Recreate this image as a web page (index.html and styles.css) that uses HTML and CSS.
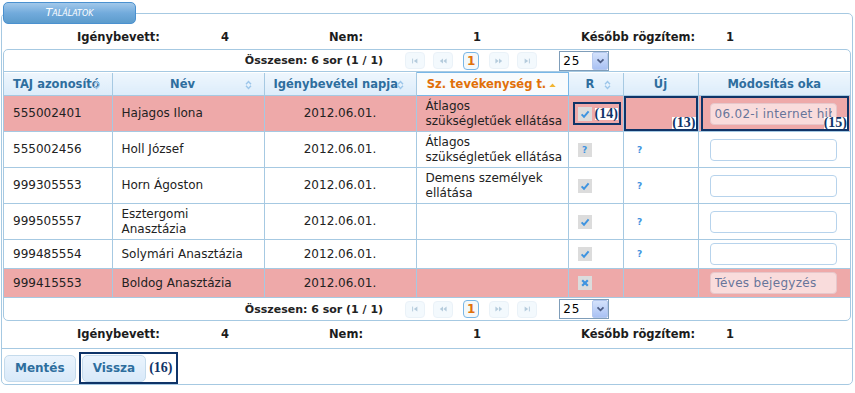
FILE: index.html
```html
<!DOCTYPE html>
<html lang="hu">
	<head>
		<meta charset="utf-8">
		<title>Találatok</title>
		<link rel="stylesheet" href="styles.css">
	</head>
	<body>
		<svg class="sprite" aria-hidden="true">
			<symbol id="i-sort" viewBox="0 0 7 10"><path d="M1 4.2L3.5 1.6L6 4.2M1 5.8L3.5 8.4L6 5.8" fill="none" stroke="currentColor" stroke-width="1.4"/></symbol>
			<symbol id="i-asc" viewBox="0 0 8 5"><path d="M0 5L4 0.5L8 5z" fill="currentColor"/></symbol>
			<symbol id="i-check" viewBox="0 0 14 14"><path d="M3.6 7.4L6 9.8L10.6 4.4" fill="none" stroke="currentColor" stroke-width="2"/></symbol>
			<symbol id="i-cross" viewBox="0 0 14 14"><path d="M4.2 4.2L9.8 9.8M9.8 4.2L4.2 9.8" stroke="currentColor" stroke-width="2.2"/></symbol>
			<symbol id="i-first" viewBox="0 0 10 7"><path d="M2 0.5v6" stroke="currentColor" stroke-width="1.2"/><path d="M8 0.5L3.5 3.5L8 6.5z" fill="currentColor"/></symbol>
			<symbol id="i-prev" viewBox="0 0 10 7"><path d="M5 0.5L1 3.5L5 6.5zM9.5 0.5L5.5 3.5L9.5 6.5z" fill="currentColor"/></symbol>
			<symbol id="i-next" viewBox="0 0 10 7"><path d="M0.5 0.5L4.5 3.5L0.5 6.5zM5 0.5L9 3.5L5 6.5z" fill="currentColor"/></symbol>
			<symbol id="i-last" viewBox="0 0 10 7"><path d="M2 0.5L6.5 3.5L2 6.5z" fill="currentColor"/><path d="M8 0.5v6" stroke="currentColor" stroke-width="1.2"/></symbol>
			<symbol id="i-down" viewBox="0 0 10 7"><path d="M1.5 1.5L5 5L8.5 1.5" fill="none" stroke="currentColor" stroke-width="2"/></symbol>
		</svg>

		<fieldset class="results">
			<legend class="results-title"><span class="results-title-text">Találatok</span></legend>

			<div class="summary">
				<span>Igénybevett:</span><span>4</span>
				<span>Nem:</span><span>1</span>
				<span>Később rögzítem:</span><span>1</span>
			</div>

			<div class="grid-panel">
				<div class="pager pager-top">
					<span class="pager-info">Összesen: 6 sor (1 / 1)</span>
					<button class="pager-btn" disabled><svg><use href="#i-first"/></svg></button>
					<button class="pager-btn" disabled><svg><use href="#i-prev"/></svg></button>
					<span class="pager-page">1</span>
					<button class="pager-btn" disabled><svg><use href="#i-next"/></svg></button>
					<button class="pager-btn" disabled><svg><use href="#i-last"/></svg></button>
					<span class="page-size">
						<select><option>25</option><option>50</option></select>
						<span class="page-size-arrow"><svg><use href="#i-down"/></svg></span>
					</span>
				</div>

				<table class="grid">
					<colgroup>
						<col class="col-taj">
						<col class="col-wide">
						<col class="col-wide">
						<col class="col-wide">
						<col class="col-r">
						<col class="col-new">
						<col class="col-wide">
					</colgroup>
					<thead>
						<tr>
							<th>TAJ azonosító<svg class="sort"><use href="#i-sort"/></svg></th>
							<th>Név<svg class="sort"><use href="#i-sort"/></svg></th>
							<th>Igénybevétel napja<svg class="sort"><use href="#i-sort"/></svg></th>
							<th class="is-sorted">Sz. tevékenység t.<svg class="sort-asc"><use href="#i-asc"/></svg></th>
							<th>R<svg class="sort"><use href="#i-sort"/></svg></th>
							<th class="plain">Új</th>
							<th class="plain">Módosítás oka</th>
						</tr>
					</thead>
					<tbody>
						<tr class="is-rejected">
							<td>555002401</td>
							<td>Hajagos Ilona</td>
							<td class="date">2012.06.01.</td>
							<td>Átlagos<br>szükségletűek ellátása</td>
							<td>
								<span class="note note-inline note-flag">
									<span class="flag"><svg><use href="#i-check"/></svg></span>
									<span class="note-label">(14)</span>
								</span>
							</td>
							<td class="noted">
								<span class="note note-fill"><span class="note-label">(13)</span></span>
							</td>
							<td class="noted reason">
								<input class="reason-input" value="06.02-i internet hiba miatt" disabled>
								<span class="note note-fill note-reason"><span class="note-label">(15)</span></span>
							</td>
						</tr>
						<tr>
							<td>555002456</td>
							<td>Holl József</td>
							<td class="date">2012.06.01.</td>
							<td>Átlagos<br>szükségletűek ellátása</td>
							<td><span class="flag flag-unknown">?</span></td>
							<td><span class="query">?</span></td>
							<td class="reason"><input class="reason-input"></td>
						</tr>
						<tr>
							<td>999305553</td>
							<td>Horn Ágoston</td>
							<td class="date">2012.06.01.</td>
							<td>Demens személyek<br>ellátása</td>
							<td><span class="flag"><svg><use href="#i-check"/></svg></span></td>
							<td><span class="query">?</span></td>
							<td class="reason"><input class="reason-input"></td>
						</tr>
						<tr>
							<td>999505557</td>
							<td>Esztergomi<br>Anasztázia</td>
							<td class="date">2012.06.01.</td>
							<td></td>
							<td><span class="flag"><svg><use href="#i-check"/></svg></span></td>
							<td><span class="query">?</span></td>
							<td class="reason"><input class="reason-input"></td>
						</tr>
						<tr>
							<td>999485554</td>
							<td>Solymári Anasztázia</td>
							<td class="date">2012.06.01.</td>
							<td></td>
							<td><span class="flag"><svg><use href="#i-check"/></svg></span></td>
							<td><span class="query">?</span></td>
							<td class="reason"><input class="reason-input"></td>
						</tr>
						<tr class="is-rejected">
							<td>999415553</td>
							<td>Boldog Anasztázia</td>
							<td class="date">2012.06.01.</td>
							<td></td>
							<td><span class="flag"><svg><use href="#i-cross"/></svg></span></td>
							<td></td>
							<td class="reason"><input class="reason-input" value="Téves bejegyzés" disabled></td>
						</tr>
					</tbody>
				</table>

				<div class="pager">
					<span class="pager-info">Összesen: 6 sor (1 / 1)</span>
					<button class="pager-btn" disabled><svg><use href="#i-first"/></svg></button>
					<button class="pager-btn" disabled><svg><use href="#i-prev"/></svg></button>
					<span class="pager-page">1</span>
					<button class="pager-btn" disabled><svg><use href="#i-next"/></svg></button>
					<button class="pager-btn" disabled><svg><use href="#i-last"/></svg></button>
					<span class="page-size">
						<select><option>25</option><option>50</option></select>
						<span class="page-size-arrow"><svg><use href="#i-down"/></svg></span>
					</span>
				</div>
			</div>

			<div class="summary summary-bottom">
				<span>Igénybevett:</span><span>4</span>
				<span>Nem:</span><span>1</span>
				<span>Később rögzítem:</span><span>1</span>
			</div>

			<div class="actions">
				<button class="action">Mentés</button>
				<span class="note note-inline note-action">
					<button class="action">Vissza</button>
					<span class="note-label">(16)</span>
				</span>
			</div>
		</fieldset>
	</body>
</html>
```

FILE: styles.css
```css
body {
	margin: 0;
	padding: 2px 2px 0 1px;
	font-family: 'DejaVu Sans', Verdana, sans-serif;
	font-size: 12px;
	color: #222;
	background: #fff;
}

.sprite {
	position: absolute;
	width: 0;
	height: 0;
}

/* outer box */
.results {
	margin: 0;
	padding: 0 1px;
	min-width: 0;
	border: 1px solid #a6c9e2;
	border-radius: 5px;
}

.results-title {
	box-sizing: border-box;
	width: 133px;
	height: 22px;
	margin: 0;
	padding: 0;
	border: 1px solid #4a91d0;
	border-radius: 5px;
	background: linear-gradient(#a2c8ea, #72abdc 50%, #5c9ccc);
	color: #fff;
	font-size: 11px;
	font-style: italic;
	font-variant: small-caps;
	line-height: 20px;
}

.results-title-text {
	display: block;
	text-align: center;
}

.summary {
	display: grid;
	grid-template-columns: 144px 108px 144px 108px 145px auto;
	height: 25px;
	padding-left: 74px;
	font-size: 11.5px;
	font-weight: bold;
	line-height: 27px;
	color: #1c1c1c;
}

.summary-bottom {
	height: 27px;
	line-height: 27px;
	margin: 0 -1px;
	padding-left: 75px;
	border-bottom: 1px solid #a6c9e2;
}

/* grid */
.grid-panel {
	border: 1px solid #a6c9e2;
	border-radius: 5px;
	overflow: hidden;
	background: #fff;
}

.pager {
	display: flex;
	align-items: center;
	justify-content: center;
	height: 22px;
	font-size: 11px;
	font-weight: bold;
}

.pager-top {
	height: 21px;
	border-bottom: 1px solid #a6c9e2;
}

.pager-info {
	margin-right: 18px;
}

.pager-btn {
	display: flex;
	align-items: center;
	justify-content: center;
	width: 20px;
	height: 17px;
	margin: 0 4px;
	padding: 0;
	border: 1px solid #c5dbec;
	border-radius: 4px;
	background: #dfeffc;
	color: #2e6e9e;
	opacity: .35;
}

.pager-btn svg {
	width: 8px;
	height: 6px;
}

.pager-page {
	box-sizing: border-box;
	width: 16px;
	height: 18px;
	margin: 0 6px;
	border: 1px solid #79b7e7;
	border-radius: 4px;
	background: #f5f8f9;
	color: #e17009;
	font-size: 12px;
	line-height: 16px;
	text-align: center;
}

.page-size {
	position: relative;
	margin-left: 18px;
}

.page-size select {
	appearance: none;
	box-sizing: border-box;
	width: 50px;
	height: 20px;
	padding: 0 0 0 3px;
	border: 1px solid #7f9db9;
	border-radius: 0;
	background: #fff;
	color: #000;
	font: 12px 'DejaVu Sans', Verdana, sans-serif;
	letter-spacing: 1px;
}

.page-size-arrow {
	position: absolute;
	top: 1px;
	right: 1px;
	display: flex;
	align-items: center;
	justify-content: center;
	width: 16px;
	height: 18px;
	box-sizing: border-box;
	border: 1px solid #b4c8ee;
	border-radius: 2px;
	background: linear-gradient(#d4e2fb, #a9c1f3);
	color: #4d5d85;
}

.page-size-arrow svg {
	width: 9px;
	height: 6px;
}

.grid {
	width: 100%;
	border-collapse: collapse;
	table-layout: fixed;
}

.col-taj { width: 108px; }
.col-wide { width: 152px; }
.col-r { width: 55px; }
.col-new { width: 75px; }

.grid th {
	position: relative;
	height: 22px;
	padding: 0 20px 0 9px;
	border-right: 1px solid #a6c9e2;
	border-bottom: 1px solid #a6c9e2;
	background: linear-gradient(#eef6fd, #dcecfa);
	color: #2e6e9e;
	font-size: 11.5px;
	font-weight: bold;
	white-space: nowrap;
}

.grid th.plain {
	padding: 0 4px;
}

.grid th.is-sorted {
	border: 1px solid #79b7e7;
	background: #f8fbfd;
	color: #e17009;
}

.grid th:last-child,
.grid td:last-child {
	border-right: 0;
}

.sort {
	position: absolute;
	top: 7px;
	right: 12px;
	width: 7px;
	height: 10px;
	color: #9cc6ea;
}

.sort-asc {
	position: absolute;
	top: 10px;
	right: 12px;
	width: 7px;
	height: 4px;
	color: #f2b531;
}

.grid td {
	height: 22px;
	padding: 3px 5px 3px 9px;
	border-right: 1px solid #a6c9e2;
	border-bottom: 1px solid #a6c9e2;
	line-height: 14.5px;
	vertical-align: middle;
	white-space: nowrap;
}

.grid td.date { text-align: center; padding-left: 5px; }
.grid td.reason { padding-left: 11px; }
.grid td.noted { position: relative; }

.is-rejected td {
	background: #eea9a9;
}

.flag {
	display: inline-block;
	width: 14px;
	height: 14px;
	background: #dcdcdc;
	color: #3f94e0;
	vertical-align: middle;
	font-size: 9px;
	font-weight: bold;
	line-height: 14px;
	text-align: center;
}

.flag svg {
	display: block;
	width: 14px;
	height: 14px;
}

.query {
	display: inline-block;
	width: 14px;
	color: #3f94e0;
	font-size: 9px;
	font-weight: bold;
	text-align: center;
}

.reason-input {
	box-sizing: border-box;
	width: 127px;
	height: 22px;
	padding: 0 4px;
	border: 1px solid #b7d3ec;
	border-radius: 4px;
	background: #fff;
	color: #222;
	font: 12px 'DejaVu Sans', Verdana, sans-serif;
	vertical-align: middle;
}

.reason-input:disabled {
	border-color: #e6c7cb;
	background: #f9dcdc;
	color: #67759a;
	letter-spacing: .3px;
}

/* annotation marks */
.note {
	box-sizing: border-box;
	border: 2px solid #0f3468;
}

.note-inline {
	display: inline-flex;
	align-items: center;
	gap: 3px;
	vertical-align: middle;
}

.note-flag {
	height: 23px;
	margin-left: -5px;
	padding: 0 1px 0 3px;
}

.note-fill {
	position: absolute;
	inset: 0;
}

.note-reason {
	left: 2px;
	right: 1px;
}

.note-fill .note-label {
	position: absolute;
	right: 0;
	bottom: 0;
}

.note-label {
	background: #fff;
	color: #0f3468;
	font: bold 14px 'Liberation Serif', serif;
	line-height: 12px;
}

/* bottom buttons */
.actions {
	display: flex;
	align-items: center;
	gap: 3px;
	padding: 3px 0 0 1px;
}

.note-action {
	height: 32px;
	padding: 0 3px 0 1px;
}

.action {
	height: 27px;
	padding: 0 10px;
	border: 1px solid #c5dbec;
	border-radius: 5px;
	background: linear-gradient(#ebf4fd, #d8e9f9);
	color: #2e6e9e;
	font: bold 12px 'DejaVu Sans', Verdana, sans-serif;
}
```
